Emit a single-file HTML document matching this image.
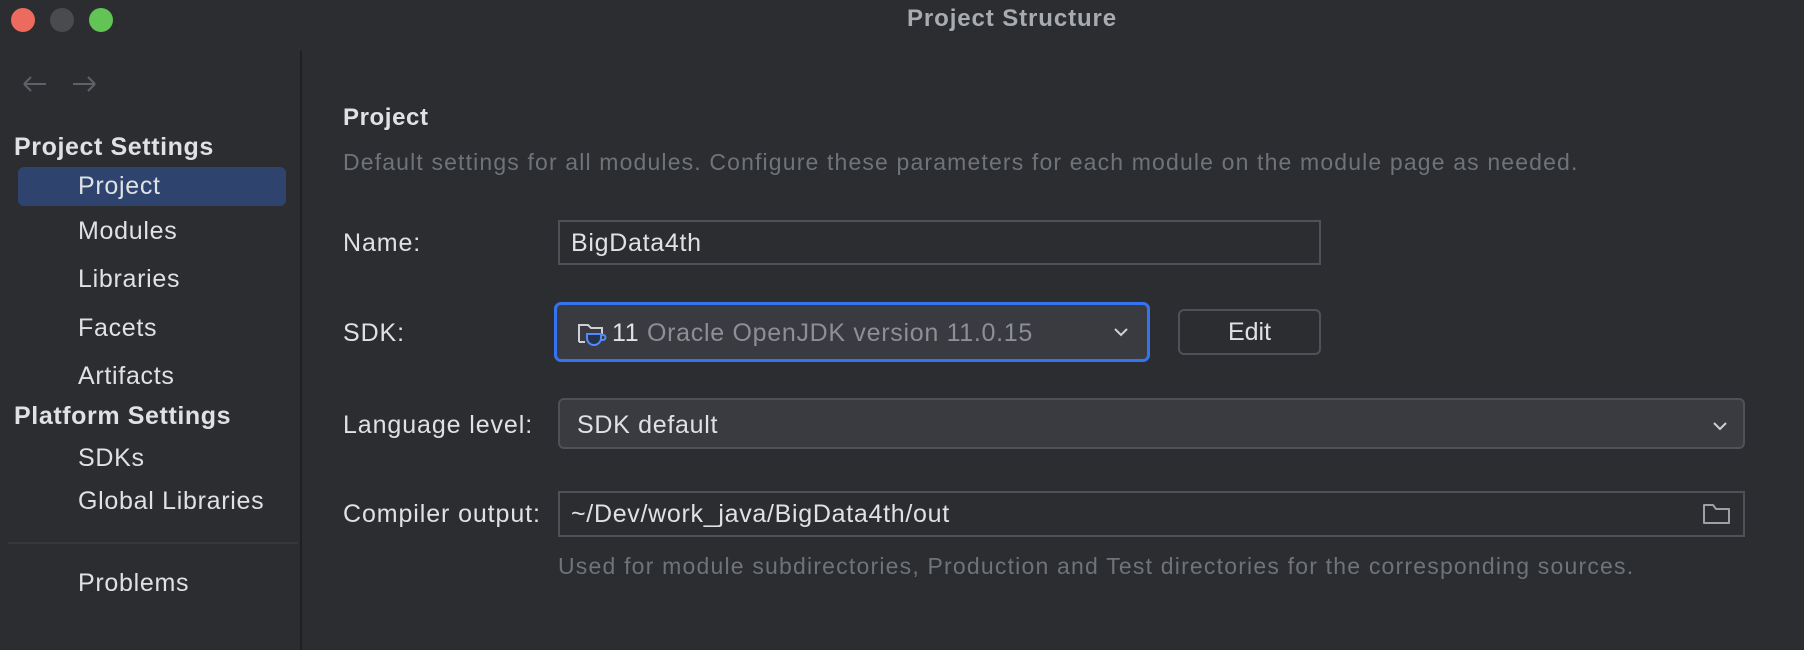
<!DOCTYPE html>
<html><head><meta charset="utf-8"><style>
*{margin:0;padding:0;box-sizing:border-box}
body{width:1804px;height:650px;background:#2b2d30;font-family:"Liberation Sans",sans-serif;color:#dfe1e5;position:relative;overflow:hidden}
.a{position:absolute;white-space:nowrap}
.dot{position:absolute;width:24px;height:24px;border-radius:50%;top:8px}
.item{position:absolute;left:78px;font-size:25px;letter-spacing:0.7px;line-height:30px}
.lbl{position:absolute;left:343px;font-size:25px;letter-spacing:0.9px;line-height:30px}
.box{position:absolute;border:2px solid #4e5157;background:#2b2d30}
.v{font-size:25px;letter-spacing:0.7px;line-height:30px}
</style></head><body>
<div class="dot" style="left:11px;background:#ed6a5e"></div>
<div class="dot" style="left:50px;background:#4a4b4e"></div>
<div class="dot" style="left:89px;background:#61c454"></div>
<div class="a" style="left:907px;top:5px;font-size:24px;letter-spacing:0.9px;font-weight:bold;color:#a8abb0">Project Structure</div>
<div class="a" style="left:300px;top:51px;width:2px;height:599px;background:#1f2023"></div>
<svg class="a" style="left:20px;top:74px" width="90" height="20" viewBox="0 0 90 20" fill="none" stroke="#5e6167" stroke-width="2"><path d="M4 10h22M4 10l7-7M4 10l7 7"/><path d="M53 10h22M75 10l-7-7M75 10l-7 7"/></svg>
<div class="a" style="left:14px;top:133px;font-size:25px;letter-spacing:0.6px;font-weight:bold;color:#dfe1e5">Project Settings</div>
<div class="a" style="left:18px;top:167px;width:268px;height:39px;background:#2e436e;border-radius:6px"></div>
<div class="item" style="top:171px">Project</div>
<div class="item" style="top:216px">Modules</div>
<div class="item" style="top:264px">Libraries</div>
<div class="item" style="top:313px">Facets</div>
<div class="item" style="top:361px">Artifacts</div>
<div class="a" style="left:14px;top:402px;font-size:25px;letter-spacing:0.6px;font-weight:bold">Platform Settings</div>
<div class="item" style="top:443px">SDKs</div>
<div class="item" style="top:486px">Global Libraries</div>
<div class="a" style="left:8px;top:542px;width:290px;height:2px;background:#35373b"></div>
<div class="item" style="top:568px">Problems</div>

<div class="a" style="left:343px;top:104px;font-size:24px;letter-spacing:0.6px;font-weight:bold">Project</div>
<div class="a" style="left:343px;top:149px;font-size:23px;letter-spacing:1.15px;color:#6f737a">Default settings for all modules. Configure these parameters for each module on the module page as needed.</div>
<div class="lbl" style="top:228px">Name:</div>
<div class="box" style="left:558px;top:220px;width:763px;height:45px"></div>
<div class="a v" style="left:571px;top:228px">BigData4th</div>
<div class="lbl" style="top:318px">SDK:</div>
<div class="a" style="left:554px;top:302px;width:596px;height:60px;border:3px solid #3574f0;border-radius:7px;background:#393b40"></div>
<svg class="a" style="left:575px;top:320px" width="32" height="28" viewBox="0 0 32 28" fill="none"><path d="M4 22V5h9l3 3h11v6" stroke="#ced0d6" stroke-width="2"/><path d="M4 22h6" stroke="#ced0d6" stroke-width="2"/><path d="M12 14h14v4a7 7 0 0 1-14 0z" fill="#25324d" stroke="#548af7" stroke-width="2"/><path d="M26 15h2a2.5 2.5 0 0 1 0 5h-2" stroke="#548af7" stroke-width="2"/></svg>
<div class="a v" style="left:612px;top:318px"><span style="color:#dfe1e5">11</span> <span style="color:#8c8f95">Oracle OpenJDK version 11.0.15</span></div>
<svg class="a" style="left:1113px;top:326px" width="16" height="12" viewBox="0 0 16 12" fill="none" stroke="#ced0d6" stroke-width="2"><path d="M2 3l6 6 6-6"/></svg>
<div class="a" style="left:1178px;top:309px;width:143px;height:46px;border:2px solid #4e5157;border-radius:6px;background:#2b2d30;font-size:25px;line-height:42px;text-align:center">Edit</div>
<div class="lbl" style="top:410px">Language level:</div>
<div class="a" style="left:558px;top:398px;width:1187px;height:51px;border:2px solid #4e5157;border-radius:6px;background:#393b40"></div>
<div class="a v" style="left:577px;top:410px">SDK default</div>
<svg class="a" style="left:1712px;top:420px" width="16" height="12" viewBox="0 0 16 12" fill="none" stroke="#ced0d6" stroke-width="2"><path d="M2 3l6 6 6-6"/></svg>
<div class="lbl" style="top:499px">Compiler output:</div>
<div class="box" style="left:558px;top:491px;width:1187px;height:46px"></div>
<div class="a v" style="left:571px;top:499px">~/Dev/work_java/BigData4th/out</div>
<svg class="a" style="left:1702px;top:502px" width="30" height="24" viewBox="0 0 30 24" fill="none" stroke="#9da0a8" stroke-width="2"><path d="M2 3h9l3 4h13v14H2z" stroke-linejoin="round"/></svg>
<div class="a" style="left:558px;top:553px;font-size:23px;letter-spacing:1.2px;color:#6f737a">Used for module subdirectories, Production and Test directories for the corresponding sources.</div>
</body></html>
